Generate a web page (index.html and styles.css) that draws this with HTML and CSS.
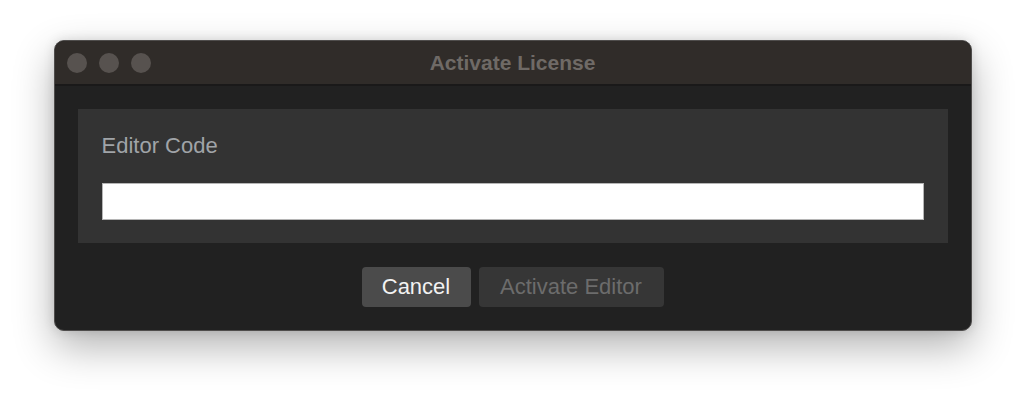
FILE: index.html
```html
<!DOCTYPE html>
<html lang="en">
<head>
  <meta charset="UTF-8">
  <title>Activate License</title>
  <link rel="stylesheet" href="styles.css">
</head>
<body>
  <div class="window">
    <div class="titlebar">
      <div class="lights">
        <span class="light"></span>
        <span class="light"></span>
        <span class="light"></span>
      </div>
      <div class="title">Activate License</div>
    </div>
    <div class="content">
      <div class="panel">
        <label class="field-label" for="editorCode">Editor Code</label>
        <input class="field-input" type="text" id="editorCode">
      </div>
      <div class="actions">
        <button class="btn btn-cancel" type="button">Cancel</button>
        <button class="btn btn-activate" type="button" disabled>Activate Editor</button>
      </div>
    </div>
  </div>
</body>
</html>
```

FILE: styles.css
```css
/* Reset */
* { box-sizing: border-box; margin: 0; padding: 0; }
html, body { height: 100%; }
body {
  background: #fff;
  font-family: "Liberation Sans", Arial, sans-serif;
  padding: 40px 0 0 1px;
  min-height: 397px;
}

/* Janela */
.window {
  width: 918px;
  margin: 0 auto;
  background: #212121;
  border: 1px solid #4f4d4c;
  border-radius: 10px;
  overflow: hidden;
  box-shadow: 0 16px 40px rgba(0,0,0,0.3), 0 0 12px rgba(0,0,0,0.12);
}

.titlebar {
  position: relative;
  height: 45px;
  background: #302c29;
  border-bottom: 2px solid #1a1919;
  display: flex;
  align-items: center;
  justify-content: center;
}
.lights {
  position: absolute;
  left: 12px;
  top: 12px;
  display: flex;
  gap: 12px;
}
.light {
  width: 20px;
  height: 20px;
  border-radius: 50%;
  background: #57524f;
}
.title {
  font-size: 21px;
  font-weight: 700;
  color: #6f6a66;
}

/* Conteúdo */
.content {
  padding: 23px 23px 23px;
}
.panel {
  background: #333;
  padding: 25px 24px 23px;
}
.field-label {
  display: block;
  font-size: 22px;
  line-height: 24px;
  color: #a0a4a8;
  margin-bottom: 25px;
}
.field-input {
  display: block;
  width: 100%;
  height: 37px;
  background: #fff;
  border: 1px solid #b5b5b5;
}

/* Botões */
.actions {
  display: flex;
  justify-content: center;
  gap: 8px;
  margin-top: 24px;
}
.btn {
  height: 40px;
  border: none;
  border-radius: 4px;
  font-family: inherit;
  font-size: 22px;
}
.btn-cancel {
  width: 109px;
  background: #4b4b4b;
  color: #f2f2f2;
}
.btn-activate {
  width: 185px;
  background: #363636;
  color: #6c6c6c;
}
```
